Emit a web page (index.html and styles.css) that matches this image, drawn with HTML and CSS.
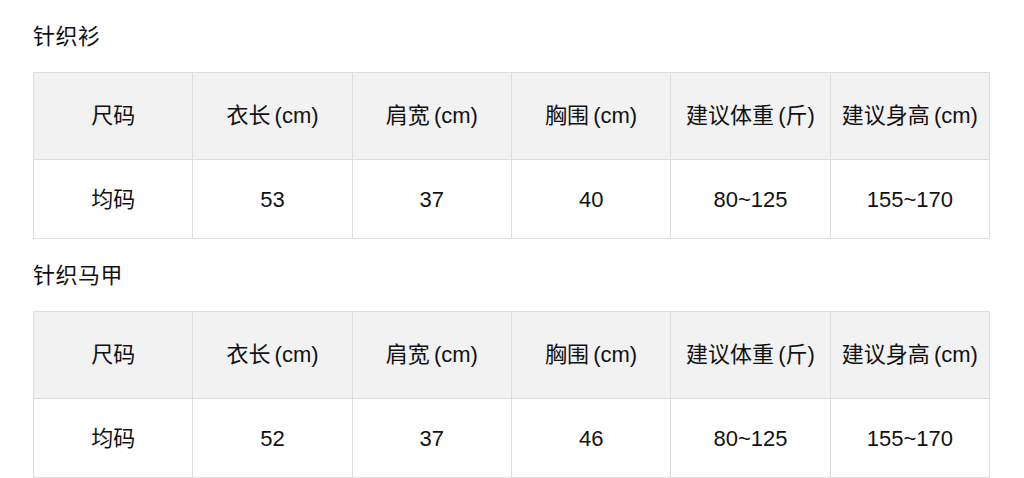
FILE: index.html
```html
<!DOCTYPE html>
<html lang="zh">
<head>
<meta charset="utf-8">
<link rel="stylesheet" href="styles.css">
</head>
<body>
<section class="section">
  <h2 class="title">针织衫</h2>
  <table class="size-table">
    <thead>
      <tr><th>尺码</th><th>衣长 (cm)</th><th>肩宽 (cm)</th><th>胸围 (cm)</th><th>建议体重 (斤)</th><th>建议身高 (cm)</th></tr>
    </thead>
    <tbody>
      <tr><td>均码</td><td>53</td><td>37</td><td>40</td><td>80~125</td><td>155~170</td></tr>
    </tbody>
  </table>
</section>
<section class="section">
  <h2 class="title">针织马甲</h2>
  <table class="size-table">
    <thead>
      <tr><th>尺码</th><th>衣长 (cm)</th><th>肩宽 (cm)</th><th>胸围 (cm)</th><th>建议体重 (斤)</th><th>建议身高 (cm)</th></tr>
    </thead>
    <tbody>
      <tr><td>均码</td><td>52</td><td>37</td><td>46</td><td>80~125</td><td>155~170</td></tr>
    </tbody>
  </table>
</section>
</body>
</html>
```
FILE: styles.css
```css
html, body {
  margin: 0;
  padding: 0;
  background: #ffffff;
}
body {
  font-family: "Liberation Sans", "Noto Sans CJK SC", sans-serif;
  color: #111111;
  padding: 0 34px 0 33px;
}
.title {
  margin: 0;
  height: 72px;
  display: flex;
  align-items: center;
  padding-top: 1px;
  box-sizing: border-box;
  font-size: 22px;
  line-height: 26px;
  font-weight: 400;
  color: #111111;
  letter-spacing: 0.5px;
}
.size-table {
  width: 957px;
  border-collapse: collapse;
  table-layout: fixed;
}
.size-table th,
.size-table td {
  border: 1px solid #dddddd;
  text-align: center;
  font-size: 22px;
  line-height: 26px;
  font-weight: 400;
  padding: 0;
  word-spacing: -2px;
}
.size-table th {
  background: #f2f2f2;
  height: 86px;
}
.size-table td {
  background: #ffffff;
  height: 76px;
  padding-top: 2px;
}
```
